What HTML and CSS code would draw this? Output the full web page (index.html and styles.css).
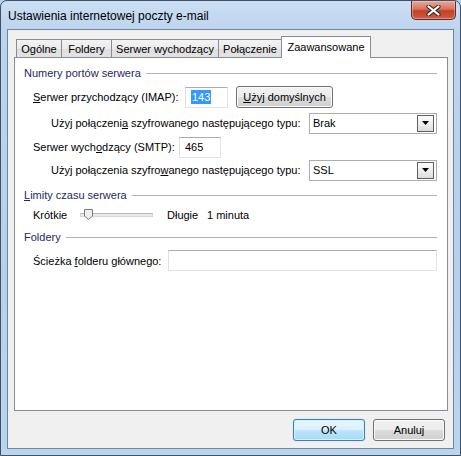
FILE: index.html
```html
<!DOCTYPE html>
<html lang="pl">
<head>
<meta charset="utf-8">
<title>Ustawienia internetowej poczty e-mail</title>
<link rel="stylesheet" href="styles.css">
</head>
<body>
<div class="window">
  <div class="titlebar">
    <span class="title">Ustawienia internetowej poczty e-mail</span>
    <div class="close">
      <svg width="15" height="11" viewBox="0 0 15 11"><path d="M2.5 1.5 L12.5 9.5 M12.5 1.5 L2.5 9.5" stroke="#3b2a28" stroke-width="4.2" stroke-linecap="round"/><path d="M2.5 1.5 L12.5 9.5 M12.5 1.5 L2.5 9.5" stroke="#ffffff" stroke-width="2.2" stroke-linecap="round"/></svg>
    </div>
  </div>
  <div class="client">
    <div class="tabs">
      <div class="tab t1">Ogólne</div>
      <div class="tab t2">Foldery</div>
      <div class="tab t3">Serwer wychodzący</div>
      <div class="tab t4">Połączenie</div>
      <div class="tab t5 active">Zaawansowane</div>
    </div>
    <div class="panel">
      <div class="group-head"><span>Numery portów serwera</span><i class="rule"></i></div>
      <div class="row r-imap">
        <span class="lbl w-imap"><u>S</u>erwer przychodzący (IMAP):</span>
        <div class="input port"><span class="seltext">143</span></div>
        <button class="btn btn-defaults"><u>U</u>żyj domyślnych</button>
      </div>
      <div class="row r-enc1">
        <span class="lbl w-enc">Użyj połączeni<u>a</u> szyfrowanego następującego typu:</span>
        <div class="combo"><span class="combo-text">Brak</span><span class="drop"><svg width="7" height="4" viewBox="0 0 7 4"><path d="M0 0 H7 L3.5 4 Z" fill="#000"/></svg></span></div>
      </div>
      <div class="row r-smtp">
        <span class="lbl w-smtp">Serwer wych<u>o</u>dzący (SMTP):</span>
        <div class="input port">465</div>
      </div>
      <div class="row r-enc2">
        <span class="lbl w-enc">Użyj połączenia szyfro<u>w</u>anego następującego typu:</span>
        <div class="combo"><span class="combo-text">SSL</span><span class="drop"><svg width="7" height="4" viewBox="0 0 7 4"><path d="M0 0 H7 L3.5 4 Z" fill="#000"/></svg></span></div>
      </div>
      <div class="group-head gh2"><span><u>L</u>imity czasu serwera</span><i class="rule"></i></div>
      <div class="row r-slider">
        <span class="lbl w-short">Krótkie</span>
        <div class="slider">
          <span class="track"></span>
          <svg class="thumb" width="9" height="11" viewBox="0 0 9 11"><path d="M0.5 0.5 H8.5 V7 L4.5 10.5 L0.5 7 Z" fill="#eeeeee" stroke="#7a7a7a"/></svg>
        </div>
        <span class="lbl w-long">Długie</span>
        <span class="lbl">1 minuta</span>
      </div>
      <div class="group-head gh3"><span>Foldery</span><i class="rule"></i></div>
      <div class="row r-path">
        <span class="lbl w-path">Ścieżka <u>f</u>olderu głównego:</span>
        <div class="input path"></div>
      </div>
    </div>
    <div class="footer">
      <button class="btn btn-main default">OK</button>
      <button class="btn btn-main">Anuluj</button>
    </div>
  </div>
</div>
</body>
</html>
```
FILE: styles.css
```css
html, body {
  margin: 0;
  padding: 0;
  background: #b9d1ec;
}

.window {
  width: 461px;
  height: 456px;
  box-sizing: border-box;
  border: 1px solid #3d5169;
  border-radius: 7px 7px 0 0;
  background: linear-gradient(180deg, #cbdef3 0px, #bed4ee 28px, #b7cfeb 60%, #bcd5ef 100%);
  padding: 0 6px 6px 6px;
  display: flex;
  flex-direction: column;
  font-family: "Liberation Sans", Arial, sans-serif;
  font-size: 11px;
  color: #000;
  overflow: hidden;
}

.titlebar {
  height: 28px;
  flex: none;
  display: flex;
  align-items: flex-start;
}

.title {
  font-size: 12px;
  line-height: 16px;
  padding-top: 7px;
  margin-left: 1px;
  color: #000;
}

.close {
  margin-left: auto;
  margin-right: -2px;
  width: 45px;
  height: 19px;
  box-sizing: border-box;
  border: 1px solid #5e2a22;
  border-top: none;
  border-radius: 0 0 5px 5px;
  background: linear-gradient(180deg, #e9a999 0%, #d5735f 45%, #c23f27 55%, #cf5d45 100%);
  box-shadow: inset 0 0 0 1px rgba(255, 210, 200, 0.45);
  display: flex;
  align-items: center;
  justify-content: center;
}

.client {
  flex: 1;
  min-height: 0;
  background: #f0f0f0;
  border: 1px solid #6f849e;
  display: flex;
  flex-direction: column;
  padding: 6px 5px 7px 6px;
}

.tabs {
  display: flex;
  align-items: flex-end;
  height: 21px;
  padding-left: 2px;
  flex: none;
  position: relative;
  z-index: 1;
}

.tab {
  box-sizing: border-box;
  height: 18px;
  border: 1px solid #898c95;
  border-bottom: none;
  background: linear-gradient(180deg, #f3f3f3 0%, #ebebeb 50%, #dedede 51%, #e3e3e3 100%);
  padding-top: 1px;
  line-height: 16px;
  text-align: center;
  white-space: nowrap;
  margin-left: -1px;
}

.tab:first-child {
  margin-left: 0;
}

.t1 { width: 46px; }
.t2 { width: 51px; }
.t3 { width: 108px; }
.t4 { width: 64px; }
.t5 { width: 90px; }

.tab.active {
  height: 22px;
  margin-bottom: -1px;
  background: #ffffff;
  padding-top: 2px;
  position: relative;
}

.panel {
  flex: 1;
  background: #ffffff;
  border: 1px solid #898c95;
  padding: 8px 10px 0 9px;
  display: flex;
  flex-direction: column;
}

.group-head {
  display: flex;
  align-items: center;
  height: 14px;
  line-height: 14px;
  color: #1a2a62;
}

.group-head .rule {
  flex: 1;
  height: 1px;
  background: #b2b2b2;
  margin-left: 5px;
}

.gh2 { margin-top: 7px; }
.gh3 { margin-top: 8px; }

.row {
  display: flex;
  align-items: center;
  margin-left: 9px;
  height: 22px;
}

.r-imap { margin-top: 6px; }
.r-enc1 { margin-top: 4px; margin-left: 27px; }
.r-smtp { margin-top: 2px; }
.r-enc2 { margin-top: 1px; margin-left: 27px; }
.r-slider { margin-top: 6px; height: 14px; }
.r-path { margin-top: 6px; height: 21px; }

.lbl {
  white-space: nowrap;
  flex: none;
  line-height: 14px;
}

.w-imap { width: 152px; }
.w-smtp { width: 146px; }
.w-enc { width: 258px; }
.w-path { width: 135px; }
.w-short { width: 47px; }
.w-long { width: 40px; }

.input {
  box-sizing: border-box;
  height: 21px;
  border: 1px solid #e2e3ea;
  border-top-color: #abadb3;
  border-left-color: #dbdfe6;
  background: #fff;
  padding-left: 5px;
  line-height: 19px;
}

.port {
  width: 43px;
}

.r-smtp .port {
  width: 42px;
}

.seltext {
  background: #3399ff;
  color: #fff;
  padding: 1px 1px;
}

.path {
  flex: 1;
}

.btn {
  font-family: "Liberation Sans", Arial, sans-serif;
  font-size: 11px;
  color: #000;
  box-sizing: border-box;
  height: 22px;
  border: 1px solid #707070;
  border-radius: 3px;
  background: linear-gradient(180deg, #f2f2f2 0%, #ebebeb 50%, #dddddd 51%, #cfcfcf 100%);
  box-shadow: inset 0 0 0 1px #fbfbfb;
  padding: 0;
  margin: 0;
}

.btn-defaults {
  width: 97px;
  margin-left: 8px;
}

.combo {
  box-sizing: border-box;
  width: 128px;
  height: 21px;
  border: 1px solid #a7aeb6;
  background: #fff;
  display: flex;
  align-items: center;
  padding: 0 2px 0 3px;
}

.combo-text {
  flex: 1;
  line-height: 14px;
}

.drop {
  box-sizing: border-box;
  width: 17px;
  height: 17px;
  border: 1px solid #5f5f5f;
  background: linear-gradient(180deg, #fdfdfd 0%, #ececec 60%, #dcdcdc 100%);
  display: flex;
  align-items: center;
  justify-content: center;
}

.slider {
  position: relative;
  width: 73px;
  height: 14px;
  flex: none;
  margin-right: 14px;
}

.track {
  position: absolute;
  left: 0;
  right: 0;
  top: 5px;
  height: 2px;
  border: 1px solid #d6d6d6;
  border-top-color: #b9b9b9;
  background: #e7eaea;
}

.thumb {
  position: absolute;
  left: 4px;
  top: 1px;
}

.footer {
  flex: none;
  display: flex;
  justify-content: flex-end;
  margin-top: 8px;
  padding-right: 3px;
  gap: 8px;
}

.btn-main {
  width: 72px;
}

.btn.default {
  border-color: #3c7fb1;
  background: linear-gradient(180deg, #eaf6fd 0%, #d9f0fc 50%, #bee6fd 51%, #a7d9f5 100%);
  box-shadow: inset 0 0 0 1px #d6f0fc, 0 0 1px #6ac7f0;
}
```
